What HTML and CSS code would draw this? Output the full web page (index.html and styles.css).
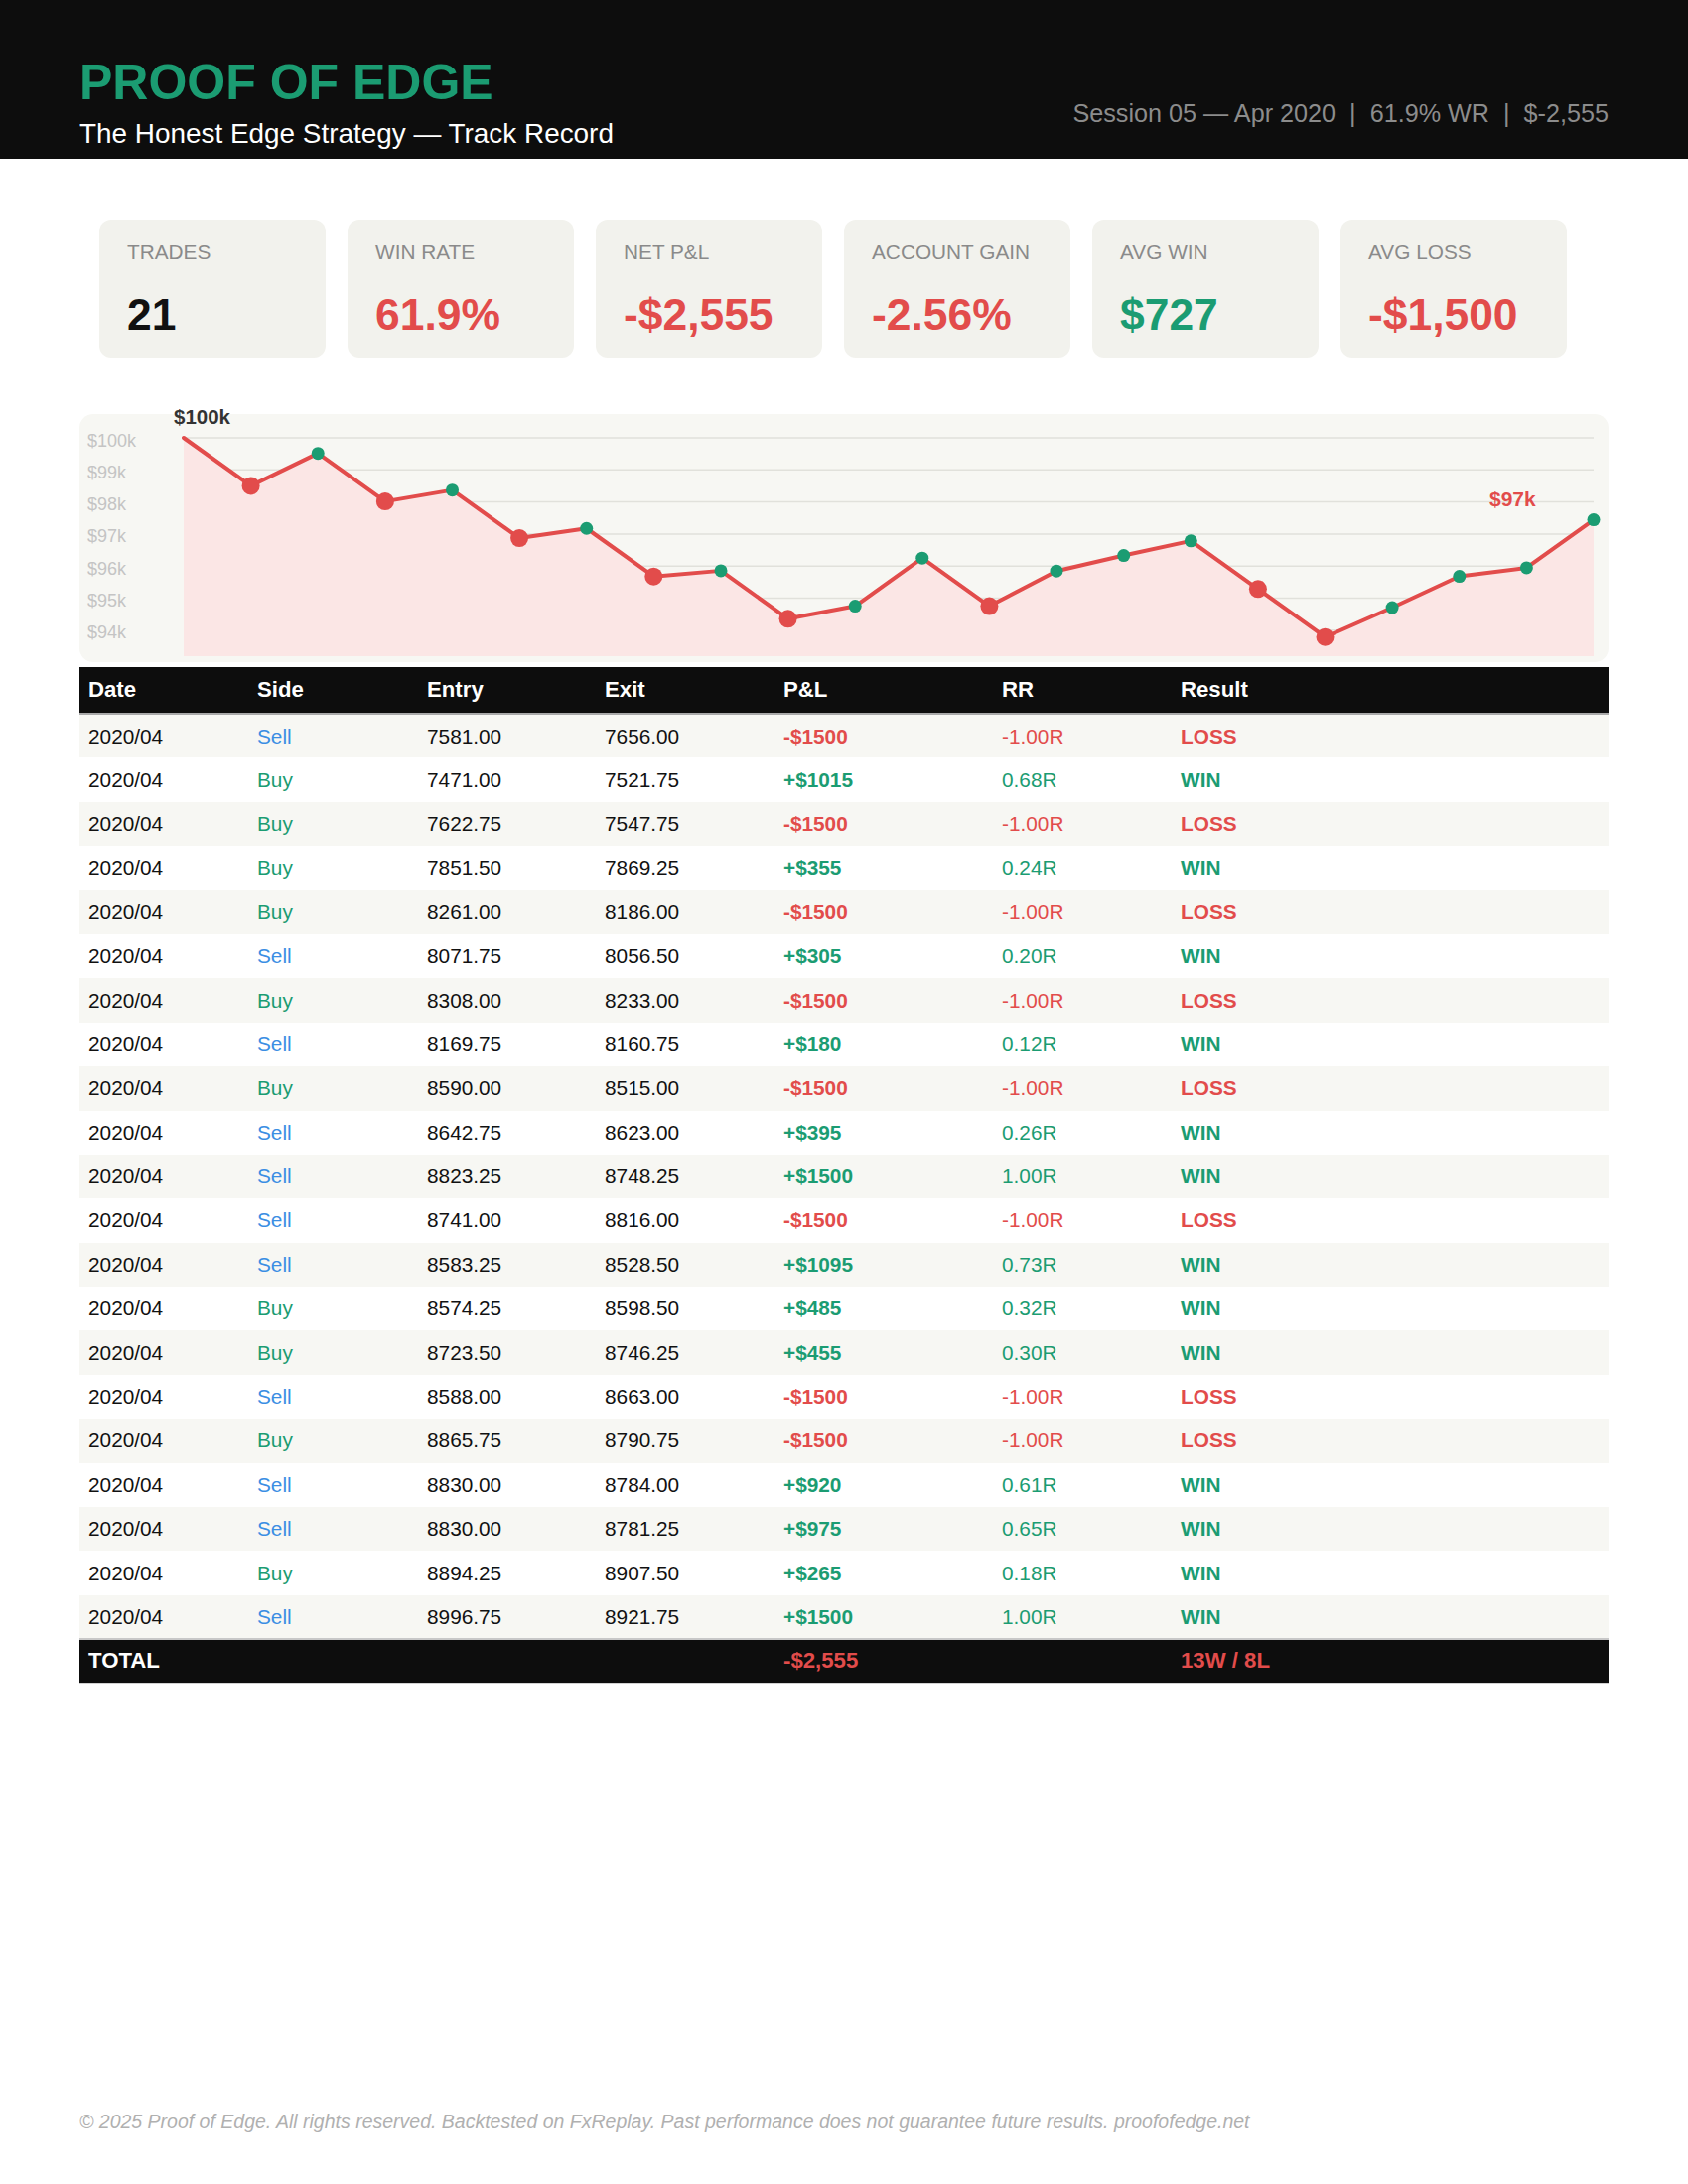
FILE: index.html
```html
<!DOCTYPE html>
<html lang="en">
<head>
<meta charset="utf-8">
<title>Proof of Edge — Track Record</title>
<link rel="stylesheet" href="styles.css">
</head>
<body>
<div class="page">
  <header class="masthead">
    <div class="brand">
      <h1 class="brand-title">PROOF OF EDGE</h1>
      <p class="brand-sub">The Honest Edge Strategy — Track Record</p>
    </div>
    <div class="meta">Session 05 — Apr 2020 <span class="sep">|</span> 61.9% WR <span class="sep">|</span> $-2,555</div>
  </header>

  <main class="content">
    <section class="stats">
      <div class="card"><div class="card-label">TRADES</div><div class="card-value">21</div></div>
      <div class="card"><div class="card-label">WIN RATE</div><div class="card-value neg">61.9%</div></div>
      <div class="card"><div class="card-label">NET P&amp;L</div><div class="card-value neg">-$2,555</div></div>
      <div class="card"><div class="card-label">ACCOUNT GAIN</div><div class="card-value neg">-2.56%</div></div>
      <div class="card"><div class="card-label">AVG WIN</div><div class="card-value pos">$727</div></div>
      <div class="card"><div class="card-label">AVG LOSS</div><div class="card-value neg">-$1,500</div></div>
    </section>

    <section class="chart">
      <svg class="chart-svg" width="1540" height="250" viewBox="0 0 1540 250">
        <g class="grid">
          <line x1="105" y1="24" x2="1525" y2="24"/>
          <line x1="105" y1="56.3" x2="1525" y2="56.3"/>
          <line x1="105" y1="88.6" x2="1525" y2="88.6"/>
          <line x1="105" y1="120.9" x2="1525" y2="120.9"/>
          <line x1="105" y1="153.2" x2="1525" y2="153.2"/>
          <line x1="105" y1="185.5" x2="1525" y2="185.5"/>
          <line x1="105" y1="217.8" x2="1525" y2="217.8"/>
        </g>
        <g class="axis">
          <text x="8" y="32.5">$100k</text>
          <text x="8" y="64.8">$99k</text>
          <text x="8" y="97.1">$98k</text>
          <text x="8" y="129.4">$97k</text>
          <text x="8" y="161.7">$96k</text>
          <text x="8" y="194">$95k</text>
          <text x="8" y="226.3">$94k</text>
        </g>
        <polygon class="area" points="105,24 172.6,72.45 240.2,39.67 307.9,88.12 375.5,76.65 443.1,125.1 510.7,115.25 578.3,163.7 646,157.88 713.6,206.33 781.2,193.58 848.8,145.13 916.4,193.58 984,158.21 1051.7,142.54 1119.3,127.84 1186.9,176.29 1254.5,224.74 1322.1,195.03 1389.8,163.54 1457.4,154.97 1525,106.53 1525,244 105,244"/>
        <polyline class="curve" points="105,24 172.6,72.45 240.2,39.67 307.9,88.12 375.5,76.65 443.1,125.1 510.7,115.25 578.3,163.7 646,157.88 713.6,206.33 781.2,193.58 848.8,145.13 916.4,193.58 984,158.21 1051.7,142.54 1119.3,127.84 1186.9,176.29 1254.5,224.74 1322.1,195.03 1389.8,163.54 1457.4,154.97 1525,106.53"/>
        <g class="dots">
          <circle class="dot-loss" cx="172.6" cy="72.45" r="9"/>
          <circle class="dot-win" cx="240.2" cy="39.67" r="6.5"/>
          <circle class="dot-loss" cx="307.9" cy="88.12" r="9"/>
          <circle class="dot-win" cx="375.5" cy="76.65" r="6.5"/>
          <circle class="dot-loss" cx="443.1" cy="125.1" r="9"/>
          <circle class="dot-win" cx="510.7" cy="115.25" r="6.5"/>
          <circle class="dot-loss" cx="578.3" cy="163.7" r="9"/>
          <circle class="dot-win" cx="646" cy="157.88" r="6.5"/>
          <circle class="dot-loss" cx="713.6" cy="206.33" r="9"/>
          <circle class="dot-win" cx="781.2" cy="193.58" r="6.5"/>
          <circle class="dot-win" cx="848.8" cy="145.13" r="6.5"/>
          <circle class="dot-loss" cx="916.4" cy="193.58" r="9"/>
          <circle class="dot-win" cx="984" cy="158.21" r="6.5"/>
          <circle class="dot-win" cx="1051.7" cy="142.54" r="6.5"/>
          <circle class="dot-win" cx="1119.3" cy="127.84" r="6.5"/>
          <circle class="dot-loss" cx="1186.9" cy="176.29" r="9"/>
          <circle class="dot-loss" cx="1254.5" cy="224.74" r="9"/>
          <circle class="dot-win" cx="1322.1" cy="195.03" r="6.5"/>
          <circle class="dot-win" cx="1389.8" cy="163.54" r="6.5"/>
          <circle class="dot-win" cx="1457.4" cy="154.97" r="6.5"/>
          <circle class="dot-win" cx="1525" cy="106.53" r="6.5"/>
        </g>
        <text class="lbl-start" x="95" y="10">$100k</text>
        <text class="lbl-end" x="1420" y="93">$97k</text>
      </svg>
    </section>

    <table class="trades">
      <colgroup>
        <col class="c-date"><col class="c-side"><col class="c-entry"><col class="c-exit"><col class="c-pnl"><col class="c-rr"><col class="c-res">
      </colgroup>
      <thead>
        <tr><th>Date</th><th>Side</th><th>Entry</th><th>Exit</th><th>P&amp;L</th><th>RR</th><th>Result</th></tr>
      </thead>
      <tbody>
        <tr><td>2020/04</td><td class="sell">Sell</td><td>7581.00</td><td>7656.00</td><td class="pnl neg">-$1500</td><td class="neg">-1.00R</td><td class="res neg">LOSS</td></tr>
        <tr><td>2020/04</td><td class="buy">Buy</td><td>7471.00</td><td>7521.75</td><td class="pnl pos">+$1015</td><td class="pos">0.68R</td><td class="res pos">WIN</td></tr>
        <tr><td>2020/04</td><td class="buy">Buy</td><td>7622.75</td><td>7547.75</td><td class="pnl neg">-$1500</td><td class="neg">-1.00R</td><td class="res neg">LOSS</td></tr>
        <tr><td>2020/04</td><td class="buy">Buy</td><td>7851.50</td><td>7869.25</td><td class="pnl pos">+$355</td><td class="pos">0.24R</td><td class="res pos">WIN</td></tr>
        <tr><td>2020/04</td><td class="buy">Buy</td><td>8261.00</td><td>8186.00</td><td class="pnl neg">-$1500</td><td class="neg">-1.00R</td><td class="res neg">LOSS</td></tr>
        <tr><td>2020/04</td><td class="sell">Sell</td><td>8071.75</td><td>8056.50</td><td class="pnl pos">+$305</td><td class="pos">0.20R</td><td class="res pos">WIN</td></tr>
        <tr><td>2020/04</td><td class="buy">Buy</td><td>8308.00</td><td>8233.00</td><td class="pnl neg">-$1500</td><td class="neg">-1.00R</td><td class="res neg">LOSS</td></tr>
        <tr><td>2020/04</td><td class="sell">Sell</td><td>8169.75</td><td>8160.75</td><td class="pnl pos">+$180</td><td class="pos">0.12R</td><td class="res pos">WIN</td></tr>
        <tr><td>2020/04</td><td class="buy">Buy</td><td>8590.00</td><td>8515.00</td><td class="pnl neg">-$1500</td><td class="neg">-1.00R</td><td class="res neg">LOSS</td></tr>
        <tr><td>2020/04</td><td class="sell">Sell</td><td>8642.75</td><td>8623.00</td><td class="pnl pos">+$395</td><td class="pos">0.26R</td><td class="res pos">WIN</td></tr>
        <tr><td>2020/04</td><td class="sell">Sell</td><td>8823.25</td><td>8748.25</td><td class="pnl pos">+$1500</td><td class="pos">1.00R</td><td class="res pos">WIN</td></tr>
        <tr><td>2020/04</td><td class="sell">Sell</td><td>8741.00</td><td>8816.00</td><td class="pnl neg">-$1500</td><td class="neg">-1.00R</td><td class="res neg">LOSS</td></tr>
        <tr><td>2020/04</td><td class="sell">Sell</td><td>8583.25</td><td>8528.50</td><td class="pnl pos">+$1095</td><td class="pos">0.73R</td><td class="res pos">WIN</td></tr>
        <tr><td>2020/04</td><td class="buy">Buy</td><td>8574.25</td><td>8598.50</td><td class="pnl pos">+$485</td><td class="pos">0.32R</td><td class="res pos">WIN</td></tr>
        <tr><td>2020/04</td><td class="buy">Buy</td><td>8723.50</td><td>8746.25</td><td class="pnl pos">+$455</td><td class="pos">0.30R</td><td class="res pos">WIN</td></tr>
        <tr><td>2020/04</td><td class="sell">Sell</td><td>8588.00</td><td>8663.00</td><td class="pnl neg">-$1500</td><td class="neg">-1.00R</td><td class="res neg">LOSS</td></tr>
        <tr><td>2020/04</td><td class="buy">Buy</td><td>8865.75</td><td>8790.75</td><td class="pnl neg">-$1500</td><td class="neg">-1.00R</td><td class="res neg">LOSS</td></tr>
        <tr><td>2020/04</td><td class="sell">Sell</td><td>8830.00</td><td>8784.00</td><td class="pnl pos">+$920</td><td class="pos">0.61R</td><td class="res pos">WIN</td></tr>
        <tr><td>2020/04</td><td class="sell">Sell</td><td>8830.00</td><td>8781.25</td><td class="pnl pos">+$975</td><td class="pos">0.65R</td><td class="res pos">WIN</td></tr>
        <tr><td>2020/04</td><td class="buy">Buy</td><td>8894.25</td><td>8907.50</td><td class="pnl pos">+$265</td><td class="pos">0.18R</td><td class="res pos">WIN</td></tr>
        <tr><td>2020/04</td><td class="sell">Sell</td><td>8996.75</td><td>8921.75</td><td class="pnl pos">+$1500</td><td class="pos">1.00R</td><td class="res pos">WIN</td></tr>
      </tbody>
      <tfoot>
        <tr><td>TOTAL</td><td></td><td></td><td></td><td class="neg">-$2,555</td><td></td><td class="neg">13W / 8L</td></tr>
      </tfoot>
    </table>
  </main>

  <footer class="footer">© 2025 Proof of Edge. All rights reserved. Backtested on FxReplay. Past performance does not guarantee future results. proofofedge.net</footer>
</div>
</body>
</html>
```

FILE: styles.css
```css
* { box-sizing: border-box; }

html, body {
  margin: 0;
  padding: 0;
  background: #ffffff;
}

body {
  font-family: "Liberation Sans", Arial, Helvetica, sans-serif;
  color: #111111;
}

.page {
  width: 1700px;
  min-height: 2200px;
  display: flex;
  flex-direction: column;
}

/* ---------- Masthead ---------- */
.masthead {
  background: #0d0d0d;
  height: 160px;
  padding: 53px 80px 0 80px;
  display: flex;
  justify-content: space-between;
  align-items: flex-start;
}

.brand-title {
  margin: 0;
  font-size: 50px;
  line-height: 60px;
  font-weight: 700;
  color: #1b9c72;
}

.brand-sub {
  margin: 5px 0 0 0;
  font-size: 27.9px;
  line-height: 33px;
  color: #ffffff;
}

.meta {
  margin-top: 46px;
  font-size: 25.2px;
  line-height: 30px;
  color: #8c8c8c;
  white-space: nowrap;
}

.meta .sep {
  margin: 0 7px;
}

/* ---------- Content ---------- */
.content {
  padding: 0 80px;
  display: flex;
  flex-direction: column;
}

.stats {
  margin-top: 62px;
  padding-left: 20px;
  display: flex;
  gap: 22px;
}

.card {
  width: 228px;
  height: 139px;
  background: #f2f2ed;
  border-radius: 12px;
  padding: 20px 28px 0 28px;
}

.card-label {
  font-size: 20.8px;
  line-height: 24px;
  color: #8a8a8a;
  white-space: nowrap;
}

.card-value {
  margin-top: 24px;
  font-size: 44.4px;
  line-height: 53px;
  font-weight: 700;
  color: #111111;
  white-space: nowrap;
}

.card-value.neg { color: #e24c4b; }
.card-value.pos { color: #1b9c72; }

/* ---------- Chart ---------- */
.chart {
  margin-top: 56px;
  height: 250px;
  background: #f7f7f3;
  border-radius: 14px;
}

.chart-svg {
  display: block;
  overflow: visible;
}

.grid line {
  stroke: #e1e1db;
  stroke-width: 1.5;
}

.axis text {
  font-family: "Liberation Sans", Arial, sans-serif;
  font-size: 18px;
  fill: #c4c4c4;
}

.area {
  fill: #fbe6e5;
}

.curve {
  fill: none;
  stroke: #e24c4b;
  stroke-width: 4;
  stroke-linejoin: round;
  stroke-linecap: round;
}

.dot-loss { fill: #e24c4b; }
.dot-win { fill: #1b9c72; }

.lbl-start {
  font-family: "Liberation Sans", Arial, sans-serif;
  font-size: 20.5px;
  font-weight: 700;
  fill: #333333;
}

.lbl-end {
  font-family: "Liberation Sans", Arial, sans-serif;
  font-size: 21px;
  font-weight: 700;
  fill: #e24c4b;
}

/* ---------- Table ---------- */
.trades {
  margin-top: 5px;
  width: 1540px;
  table-layout: fixed;
  border-collapse: collapse;
  border-spacing: 0;
}

.c-date { width: 170px; }
.c-side { width: 171px; }
.c-entry { width: 179px; }
.c-exit { width: 180px; }
.c-pnl { width: 220px; }
.c-rr { width: 180px; }
.c-res { width: 440px; }

.trades th {
  background: #0d0d0d;
  color: #ffffff;
  text-align: left;
  font-size: 22.2px;
  font-weight: 700;
  height: 47px;
  padding: 0 9px;
  border-bottom: 2px solid #a9a9a9;
}

.trades td {
  height: 44.4px;
  padding: 0 9px;
  font-size: 20.8px;
  color: #111111;
  white-space: nowrap;
}

.trades tbody tr:nth-child(odd) td { background: #f7f7f3; }
.trades tbody tr:nth-child(even) td { background: #ffffff; }

.trades td.sell { color: #3a8ee3; }
.trades td.buy { color: #1b9c72; }
.trades td.pos { color: #1b9c72; }
.trades td.neg { color: #e24c4b; }
.trades td.pnl, .trades td.res { font-weight: 700; }

.trades tfoot td {
  background: #0d0d0d;
  color: #ffffff;
  font-size: 22.2px;
  font-weight: 700;
  height: 44px;
  border-top: 2px solid #c8c8c8;
  border-bottom: 1px solid #d0d0d0;
}

.trades tfoot td.neg { color: #e24c4b; }

/* ---------- Footer ---------- */
.footer {
  margin-top: auto;
  padding: 0 80px 51px 80px;
  font-size: 19.5px;
  line-height: 23px;
  font-style: italic;
  color: #b0b0b0;
}
```
